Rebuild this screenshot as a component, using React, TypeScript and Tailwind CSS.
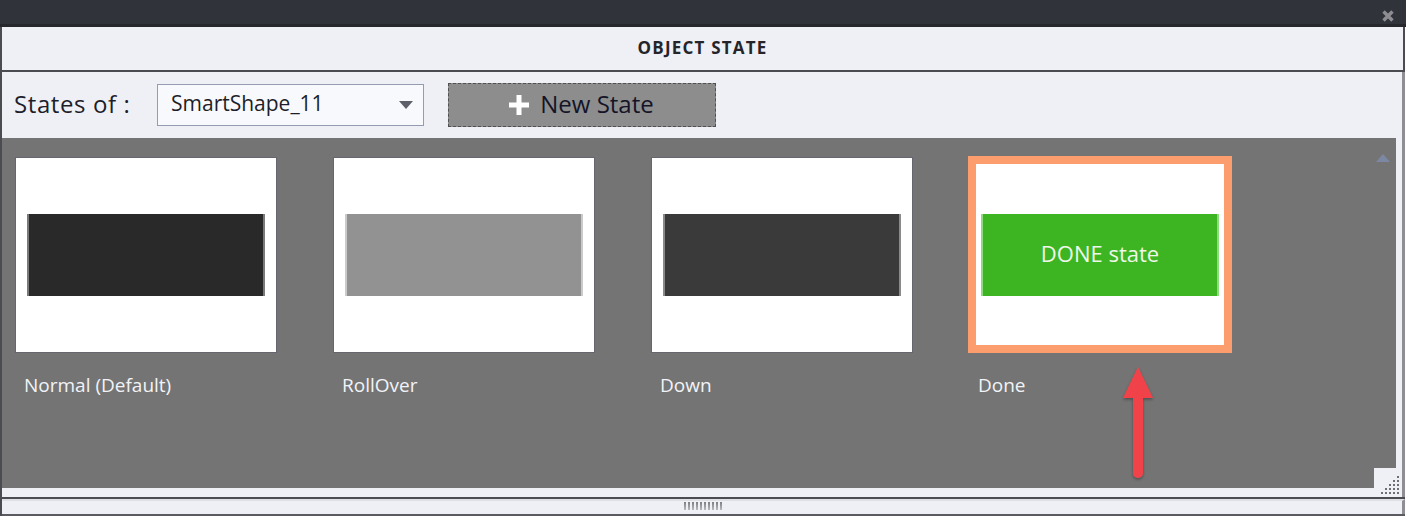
import React from "react";

type StateItem = {
  label: string;
  fill: string;
  edge: string;
  text?: string;
  active?: boolean;
};

const states: StateItem[] = [
  { label: "Normal (Default)", fill: "bg-[#292929]", edge: "border-[#7a7a7a]" },
  { label: "RollOver", fill: "bg-[#929292]", edge: "border-[#cbcbcb]" },
  { label: "Down", fill: "bg-[#3a3a3a]", edge: "border-[#8a8a8a]" },
  { label: "Done", fill: "bg-[#3db522]", edge: "border-[#8fd97e]", text: "DONE state", active: true },
];

function StateCard({ item }: { item: StateItem }) {
  return (
    <div className="flex flex-col">
      <div
        className={
          item.active
            ? "w-[264px] h-[197px] -mt-[1px] -ml-[1px] border-[8px] border-[#fb9d6c] bg-white flex items-center justify-center"
            : "w-[262px] h-[196px] border border-[#66666e] bg-white flex items-center justify-center"
        }
      >
        <div
          className={`w-[238px] h-[82px] ${item.fill} border-x-2 ${item.edge} flex items-center justify-center`}
        >
          {item.text && (
            <span className="text-[22px] text-[#eef7ea] font-['Open_Sans',sans-serif] -mt-[2px]">
              {item.text}
            </span>
          )}
        </div>
      </div>
      <div className="mt-[19px] pl-[9px] text-[19px] leading-[26px] text-[#f2f3f7] font-['Open_Sans',sans-serif]">
        {item.label}
      </div>
    </div>
  );
}

export default function App() {
  return (
    <div className="w-[1406px] h-[516px] bg-white relative overflow-hidden font-['Open_Sans',sans-serif]">
      {/* window top bar */}
      <div className="h-[27px] bg-[#31333b] border-b-[3px] border-[#25272d] flex justify-end items-start pr-[12px] pt-[10px]">
        <svg width="12" height="12" viewBox="0 0 12 12">
          <path d="M1.5 1.5 L10.5 10.5 M10.5 1.5 L1.5 10.5" stroke="#8d8d92" strokeWidth="3.4" />
        </svg>
      </div>

      <div className="w-[1405px] border-l-2 border-[#4b4c52] flex flex-col">
        {/* title */}
        <div className="h-[45px] bg-[#eff0f5] border-b-2 border-r-2 border-[#4b4c52] flex items-center justify-center pb-[2px]">
          <span className="text-[17px] font-bold text-[#24252a] tracking-[1.2px]">OBJECT STATE</span>
        </div>

        <div className="bg-[#eff0f5] border-r-[3px] border-[#8e8f95]">
          {/* toolbar */}
          <div className="h-[66px] flex items-center pl-[12px]">
            <span className="w-[143px] text-[24px] text-[#1d1e2a] tracking-[0.6px] -mt-[2px]">States of :</span>
            <div className="w-[267px] h-[42px] border border-[#959bb0] bg-[#f8f9fc] flex items-center pl-[13px] pr-[10px]">
              <span className="flex-1 text-[21px] text-[#1d1e2a] -mt-[2px]">SmartShape_11</span>
              <svg width="14" height="8" viewBox="0 0 14 8">
                <path d="M0 0 L14 0 L7 8 Z" fill="#5e6069" />
              </svg>
            </div>
            <div className="ml-[24px] w-[268px] h-[44px] bg-[#8d8d8d] border border-dashed border-[#505050] flex items-center justify-center gap-[10px] pr-[2px]">
              <svg width="22" height="22" viewBox="0 0 22 22">
                <path d="M11 1 L11 21 M1 11 L21 11" stroke="#ffffff" strokeWidth="5" />
              </svg>
              <span className="text-[24px] text-[#141428] -mt-[3px]">New State</span>
            </div>
          </div>

          {/* states area */}
          <div className="flex pr-[6px]">
            <div className="relative flex-1 h-[350px] bg-[#747474] flex gap-[56px] pl-[13px] pt-[19px]">
              {states.map((s) => (
                <StateCard key={s.label} item={s} />
              ))}

              {/* scroll up arrow */}
              <svg className="absolute right-[6px] top-[15px]" width="14" height="9" viewBox="0 0 14 9">
                <path d="M0 9 L7 1 L14 9 Z" fill="#7c88a3" />
              </svg>

              {/* annotation arrow */}
              <svg
                className="absolute left-[1117px] top-[226px]"
                width="38"
                height="120"
                viewBox="0 0 38 120"
              >
                <defs>
                  <filter id="sh" x="-50%" y="-20%" width="200%" height="140%">
                    <feDropShadow dx="0" dy="1.5" stdDeviation="1.5" floodColor="#000" floodOpacity="0.35" />
                  </filter>
                </defs>
                <g filter="url(#sh)">
                  <path d="M19 3 L34 34 L4 34 Z" fill="#f2434a" />
                  <path d="M19 30 L19 109" stroke="#f2434a" strokeWidth="10" strokeLinecap="round" />
                </g>
              </svg>

              {/* resize grip corner */}
              <div className="absolute right-0 bottom-0 w-[22px] h-[20px] bg-[#eff0f5]" />
            </div>
          </div>

          <div className="h-[9px]" />
        </div>

        {/* divider + bottom bar */}
        <div className="h-[2px] bg-[#4b4c52]" />
        <div className="h-[15px] bg-[#eff0f5] border-t-2 border-[#dfe0e5] border-r-[3px] border-r-[#8e8f95] flex justify-center">
          <div className="flex gap-[2.4px] mt-[1px] ml-[2px]">
            {Array.from({ length: 10 }).map((_, i) => (
              <div key={i} className="w-[1.6px] h-[8px] bg-gradient-to-b from-[#7e7e82] to-[#b9b9be]" />
            ))}
          </div>
        </div>
        <div className="h-[2px] bg-[#5a5b60]" />
      </div>

      {/* resize grip dots */}
      <svg className="absolute left-[1381px] top-[476px]" width="19" height="19" viewBox="0 0 19 19">
        {[
          [16, 0],
          [12, 4], [16, 4],
          [8, 8], [12, 8], [16, 8],
          [4, 12], [8, 12], [12, 12], [16, 12],
          [0, 16], [4, 16], [8, 16], [12, 16], [16, 16],
        ].map(([x, y], i) => (
          <rect key={i} x={x} y={y} width="2" height="2" fill="#6e6f75" />
        ))}
      </svg>
    </div>
  );
}
